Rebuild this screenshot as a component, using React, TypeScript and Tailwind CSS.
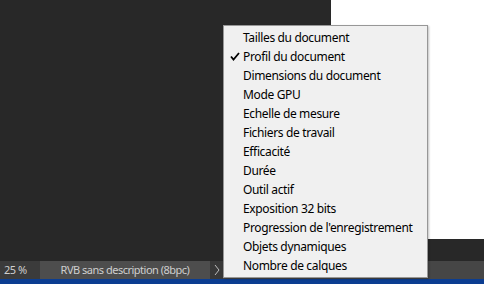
import React from "react";

const items = [
    "Tailles du document",
    "Profil du document",
    "Dimensions du document",
    "Mode GPU",
    "Echelle de mesure",
    "Fichiers de travail",
    "Efficacité",
    "Durée",
    "Outil actif",
    "Exposition 32 bits",
    "Progression de l'enregistrement",
    "Objets dynamiques",
    "Nombre de calques",
];

const checked = "Profil du document";

export default function App() {
    return (
        <div className="relative w-[484px] h-[284px] flex flex-col overflow-hidden bg-[#282828] font-['Noto_Sans',sans-serif]">
            {/* workspace */}
            <div className="flex flex-1">
                <div className="flex-1 bg-[#282828]" />
                <div className="w-[153px] flex flex-col">
                    <div className="h-[239px] bg-white" />
                    <div className="flex-1 bg-[#282828]" />
                </div>
            </div>

            {/* status bar */}
            <div className="h-[18px] flex items-stretch bg-[#464646] text-[11px] tracking-[-0.5px] text-[#cfcfcf]">
                <div className="w-[40px] bg-[#3b3b3b] pl-[4px] flex items-center">25 %</div>
                <div className="w-[170px] bg-[#4d4d4d] flex items-center justify-center">RVB sans description (8bpc)</div>
                <div className="w-[13px] bg-[#383838] flex items-center justify-center">
                    <svg width="6" height="12" viewBox="0 0 6 12" fill="none">
                        <path d="M1 1 L5 6 L1 11" stroke="#bdbdbd" strokeWidth="1" />
                    </svg>
                </div>
            </div>
            <div className="h-[5px] bg-[#0b3d91]" />

            {/* popup menu */}
            <div className="absolute left-[223px] top-[25px] w-[205px] border border-[#979797] bg-[#f0f0f0] py-[2px] shadow-[1px_1px_2px_rgba(0,0,0,0.25)]">
                {items.map((label) => (
                    <div key={label} className="relative h-[19px] flex items-center pl-[19px] text-[12px] tracking-[-0.35px] text-black whitespace-nowrap">
                        {label === checked && (
                            <svg className="absolute left-[6px] top-[5px]" width="10" height="9" viewBox="0 0 10 9">
                                <path d="M1 4.5 L3.5 7.5 L9 1" stroke="#000" strokeWidth="1.8" fill="none" />
                            </svg>
                        )}
                        {label}
                    </div>
                ))}
            </div>
        </div>
    );
}
